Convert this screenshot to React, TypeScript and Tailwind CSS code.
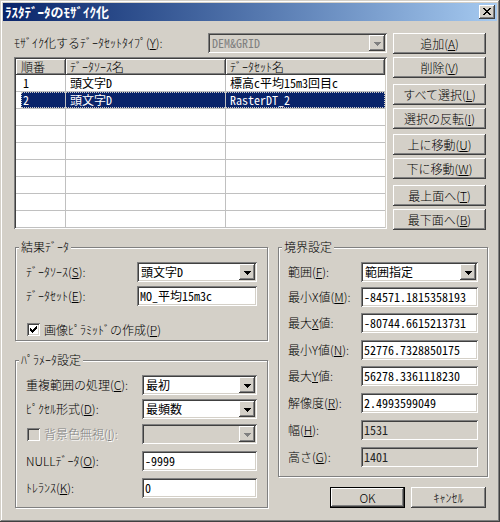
import type { ReactNode } from "react";

// Win2000-style bevels, drawn as stacked inset shadows
const raised =
  "shadow-[inset_-1px_-1px_0_#404040,inset_1px_1px_0_#ffffff,inset_-2px_-2px_0_#808080,inset_2px_2px_0_#d4d0c8]";
const sunken =
  "shadow-[inset_1px_1px_0_#808080,inset_-1px_-1px_0_#ffffff,inset_2px_2px_0_#404040,inset_-2px_-2px_0_#d4d0c8]";
const frame =
  "shadow-[inset_-1px_-1px_0_#404040,inset_1px_1px_0_#d4d0c8,inset_-2px_-2px_0_#808080,inset_2px_2px_0_#ffffff]";
const etched = "border border-[#808080] shadow-[1px_1px_0_#ffffff,inset_1px_1px_0_#ffffff]";

const ui = "font-['Noto_Sans_CJK_JP','Noto_Sans',sans-serif]";
const mono = "font-['Noto_Sans_Mono_CJK_JP','Noto_Sans_CJK_JP',monospace]";
const grayText = "text-[#808080] [text-shadow:1px_1px_0_#ffffff]";

function Button({
  children,
  className = "",
  isDefault = false,
}: {
  children: ReactNode;
  className?: string;
  isDefault?: boolean;
}) {
  return (
    <button
      type="button"
      className={`flex h-[21px] items-center justify-center bg-[#d4d0c8] pt-[1px] ${
        isDefault ? "border border-black" : ""
      } ${raised} ${className}`}
    >
      {children}
    </button>
  );
}

function Arrow({ disabled }: { disabled?: boolean }) {
  return (
    <div className={`flex h-full w-[16px] items-center justify-center bg-[#d4d0c8] ${raised}`}>
      <svg width="7" height="4" viewBox="0 0 7 4" className="mt-[1px]">
        <path d="M0 0h7v1H0zM1 1h5v1H1zM2 2h3v1H2zM3 3h1v1H3z" fill={disabled ? "#808080" : "#000"} />
      </svg>
    </div>
  );
}

function Combo({ value, disabled, className = "" }: { value?: string; disabled?: boolean; className?: string }) {
  return (
    <div className={`flex h-[20px] p-[2px] ${sunken} ${disabled ? "bg-[#d4d0c8]" : "bg-white"} ${className}`}>
      <div className={`flex flex-1 items-center pl-[2px] ${mono} ${disabled ? "text-[#808080]" : ""}`}>{value}</div>
      <Arrow disabled={disabled} />
    </div>
  );
}

function Field({ value, readOnly, className = "" }: { value: string; readOnly?: boolean; className?: string }) {
  return (
    <div
      className={`flex h-[20px] items-center px-[3px] ${sunken} ${
        readOnly ? "bg-[#d4d0c8] text-[#222]" : "bg-white"
      } ${mono} ${className}`}
    >
      {value}
    </div>
  );
}

function Check({ checked, disabled }: { checked?: boolean; disabled?: boolean }) {
  return (
    <div
      className={`flex h-[13px] w-[13px] shrink-0 items-center justify-center ${sunken} ${
        disabled ? "bg-[#d4d0c8]" : "bg-white"
      }`}
    >
      {checked && (
        <svg width="7" height="7" viewBox="0 0 7 7">
          <path
            d="M6 0h1v1H6zM5 1h2v1H5zM0 2h1v1H0zM4 2h3v1H4zM0 3h2v1H0zM3 3h3v1H3zM0 4h5v1H0zM1 5h3v1H1zM2 6h1v1H2z"
            fill="#000"
          />
        </svg>
      )}
    </div>
  );
}

function Group({ title, className = "", children }: { title: string; className?: string; children: ReactNode }) {
  return (
    <div className={`relative ${etched} ${className}`}>
      <span className="absolute -top-[8px] left-[3px] bg-[#d4d0c8] px-[2px] leading-[14px]">{title}</span>
      {children}
    </div>
  );
}

function Row({
  label,
  labelWidth,
  className = "",
  children,
}: {
  label: ReactNode;
  labelWidth: string;
  className?: string;
  children: ReactNode;
}) {
  return (
    <div className={`flex h-[20px] items-center ${className}`}>
      <div className={labelWidth}>{label}</div>
      {children}
    </div>
  );
}

const listRows = [
  ["1", "頭文字D", "標高c平均15m3回目c"],
  ["2", "頭文字D", "RasterDT_2"],
  ["", "", ""],
  ["", "", ""],
  ["", "", ""],
  ["", "", ""],
  ["", "", ""],
  ["", "", ""],
  ["", "", ""],
];

function DatasetList() {
  return (
    <div className={`mt-[4px] h-[172px] overflow-hidden bg-white p-[2px] ${sunken}`}>
      <div className="flex h-[16px]">
        <div className={`flex w-[50px] items-center bg-[#d4d0c8] pl-[5px] ${raised}`}>順番</div>
        <div className={`flex w-[160px] items-center bg-[#d4d0c8] pl-[4px] ${raised}`}>ﾃﾞｰﾀｿｰｽ名</div>
        <div className={`flex flex-1 items-center bg-[#d4d0c8] pl-[4px] ${raised}`}>ﾃﾞｰﾀｾｯﾄ名</div>
      </div>
      {listRows.map((r, i) => {
        const selected = i === 1;
        return (
          <div key={i} className="flex h-[17px] border-b border-[#c0c0c0]">
            <div className="w-[5px]" />
            <div
              className={`flex flex-1 ${mono} ${
                selected
                  ? "bg-[#0a246a] text-white outline-1 -outline-offset-1 outline-dotted outline-[#d4d0c8]"
                  : ""
              }`}
            >
              <div className="flex w-[45px] items-center border-r border-[#c0c0c0] pl-[2px]">{r[0]}</div>
              <div className="flex w-[160px] items-center border-r border-[#c0c0c0] pl-[4px]">{r[1]}</div>
              <div className="flex flex-1 items-center pl-[4px]">{r[2]}</div>
            </div>
          </div>
        );
      })}
    </div>
  );
}

function TitleBar() {
  return (
    <div className="flex h-[18px] items-center bg-linear-to-r from-[#0a246a] to-[#a6caf0] pl-[2px] pr-[2px]">
      <span className="flex-1 text-[13px] font-bold text-white">ﾗｽﾀﾃﾞｰﾀのﾓｻﾞｲｸ化</span>
      <button type="button" className={`flex h-[14px] w-[16px] items-start bg-[#d4d0c8] pl-[4px] pt-[3px] ${raised}`}>
        <svg width="8" height="7" viewBox="0 0 8 7">
          <path
            d="M0 0h2v1H0zM6 0h2v1H6zM1 1h2v1H1zM5 1h2v1H5zM2 2h4v1H2zM3 3h2v1H3zM2 4h4v1H2zM1 5h2v1H1zM5 5h2v1H5zM0 6h2v1H0zM6 6h2v1H6z"
            fill="#000"
          />
        </svg>
      </button>
    </div>
  );
}

export default function App() {
  return (
    <div
      className={`h-[522px] w-[500px] bg-[#d4d0c8] p-[3px] text-[12px] leading-[14px] font-light text-black ${frame} ${ui}`}
    >
      <TitleBar />
      <div className="pl-[11px] pt-[12px]">
        <div className="flex gap-[6px]">
          <div className="w-[373px]">
            <div className="flex h-[20px] items-center">
              <div className="w-[194px]">
                ﾓｻﾞｲｸ化するﾃﾞｰﾀｾｯﾄﾀｲﾌﾟ(<u>Y</u>):
              </div>
              <Combo value="DEM&GRID" disabled className="w-[179px]" />
            </div>
            <DatasetList />
          </div>
          <div className="flex w-[93px] flex-col">
            <Button>
              追加(<u>A</u>)
            </Button>
            <Button className="mt-[3px]">
              削除(<u>V</u>)
            </Button>
            <Button className="mt-[6px]">
              すべて選択(<u>L</u>)
            </Button>
            <Button className="mt-[3px]">
              選択の反転(<u>I</u>)
            </Button>
            <Button className="mt-[5px]">
              上に移動(<u>U</u>)
            </Button>
            <Button className="mt-[3px]">
              下に移動(<u>W</u>)
            </Button>
            <Button className="mt-[6px]">
              最上面へ(<u>T</u>)
            </Button>
            <Button className="mt-[3px]">
              最下面へ(<u>B</u>)
            </Button>
          </div>
        </div>

        <div className="ml-[1px] mt-[17px] flex">
          <div className="w-[253px]">
            <Group title="結果ﾃﾞｰﾀ" className="h-[94px] pl-[10px] pt-[14px]">
              <Row
                labelWidth="w-[111px]"
                label={
                  <>
                    ﾃﾞｰﾀｿｰｽ(<u>S</u>):
                  </>
                }
              >
                <Combo value="頭文字D" className="w-[120px]" />
              </Row>
              <Row
                className="mt-[4px]"
                labelWidth="w-[111px]"
                label={
                  <>
                    ﾃﾞｰﾀｾｯﾄ(<u>E</u>):
                  </>
                }
              >
                <Field value="MO_平均15m3c" className="w-[120px]" />
              </Row>
              <div className="mt-[17px] flex h-[13px] items-center pl-[1px]">
                <Check checked />
                <span className="ml-[4px]">
                  画像ﾋﾟﾗﾐｯﾄﾞの作成(<u>P</u>)
                </span>
              </div>
            </Group>

            <Group title="ﾊﾟﾗﾒｰﾀ設定" className="mt-[19px] h-[148px] pl-[10px] pt-[14px]">
              <Row
                labelWidth="w-[116px]"
                label={
                  <>
                    重複範囲の処理(<u>C</u>):
                  </>
                }
              >
                <Combo value="最初" className="w-[115px]" />
              </Row>
              <Row
                className="mt-[4px]"
                labelWidth="w-[116px]"
                label={
                  <>
                    ﾋﾟｸｾﾙ形式(<u>D</u>):
                  </>
                }
              >
                <Combo value="最頻数" className="w-[115px]" />
              </Row>
              <Row
                className="mt-[5px]"
                labelWidth="flex w-[116px] items-center pl-[1px]"
                label={
                  <>
                    <Check disabled />
                    <span className={`ml-[4px] ${grayText}`}>
                      背景色無視(<u>I</u>):
                    </span>
                  </>
                }
              >
                <Combo disabled className="w-[115px]" />
              </Row>
              <Row
                className="mt-[7px]"
                labelWidth="w-[116px]"
                label={
                  <>
                    NULLﾃﾞｰﾀ(<u>O</u>):
                  </>
                }
              >
                <Field value="-9999" className="w-[115px]" />
              </Row>
              <Row
                className="mt-[7px]"
                labelWidth="w-[116px]"
                label={
                  <>
                    ﾄﾚﾗﾝｽ(<u>K</u>):
                  </>
                }
              >
                <Field value="0" className="w-[115px]" />
              </Row>
            </Group>
          </div>

          <div className="ml-[10px] w-[210px]">
            <Group title="境界設定" className="h-[230px] pl-[9px] pt-[14px]">
              <Row
                labelWidth="w-[73px]"
                label={
                  <>
                    範囲(<u>F</u>):
                  </>
                }
              >
                <Combo value="範囲指定" className="w-[117px]" />
              </Row>
              <Row
                className="mt-[5px]"
                labelWidth="w-[73px]"
                label={
                  <>
                    最小X値(<u>M</u>):
                  </>
                }
              >
                <Field value="-84571.1815358193" className="w-[117px]" />
              </Row>
              <Row
                className="mt-[6px]"
                labelWidth="w-[73px]"
                label={
                  <>
                    最大<u>X</u>値:
                  </>
                }
              >
                <Field value="-80744.6615213731" className="w-[117px]" />
              </Row>
              <Row
                className="mt-[7px]"
                labelWidth="w-[73px]"
                label={
                  <>
                    最小Y値(<u>N</u>):
                  </>
                }
              >
                <Field value="52776.7328850175" className="w-[117px]" />
              </Row>
              <Row
                className="mt-[6px]"
                labelWidth="w-[73px]"
                label={
                  <>
                    最大<u>Y</u>値:
                  </>
                }
              >
                <Field value="56278.3361118230" className="w-[117px]" />
              </Row>
              <Row
                className="mt-[7px]"
                labelWidth="w-[73px]"
                label={
                  <>
                    解像度(<u>R</u>):
                  </>
                }
              >
                <Field value="2.4993599049" className="w-[117px]" />
              </Row>
              <Row
                className="mt-[7px]"
                labelWidth="w-[73px]"
                label={
                  <>
                    幅(<u>H</u>):
                  </>
                }
              >
                <Field value="1531" readOnly className="w-[117px]" />
              </Row>
              <Row
                className="mt-[7px]"
                labelWidth="w-[73px]"
                label={
                  <>
                    高さ(<u>G</u>):
                  </>
                }
              >
                <Field value="1401" readOnly className="w-[117px]" />
              </Row>
            </Group>
            <div className="mr-[2px] mt-[10px] flex justify-end gap-[6px]">
              <Button isDefault className="w-[75px]">
                OK
              </Button>
              <Button className="w-[75px]">ｷｬﾝｾﾙ</Button>
            </div>
          </div>
        </div>
      </div>
    </div>
  );
}
